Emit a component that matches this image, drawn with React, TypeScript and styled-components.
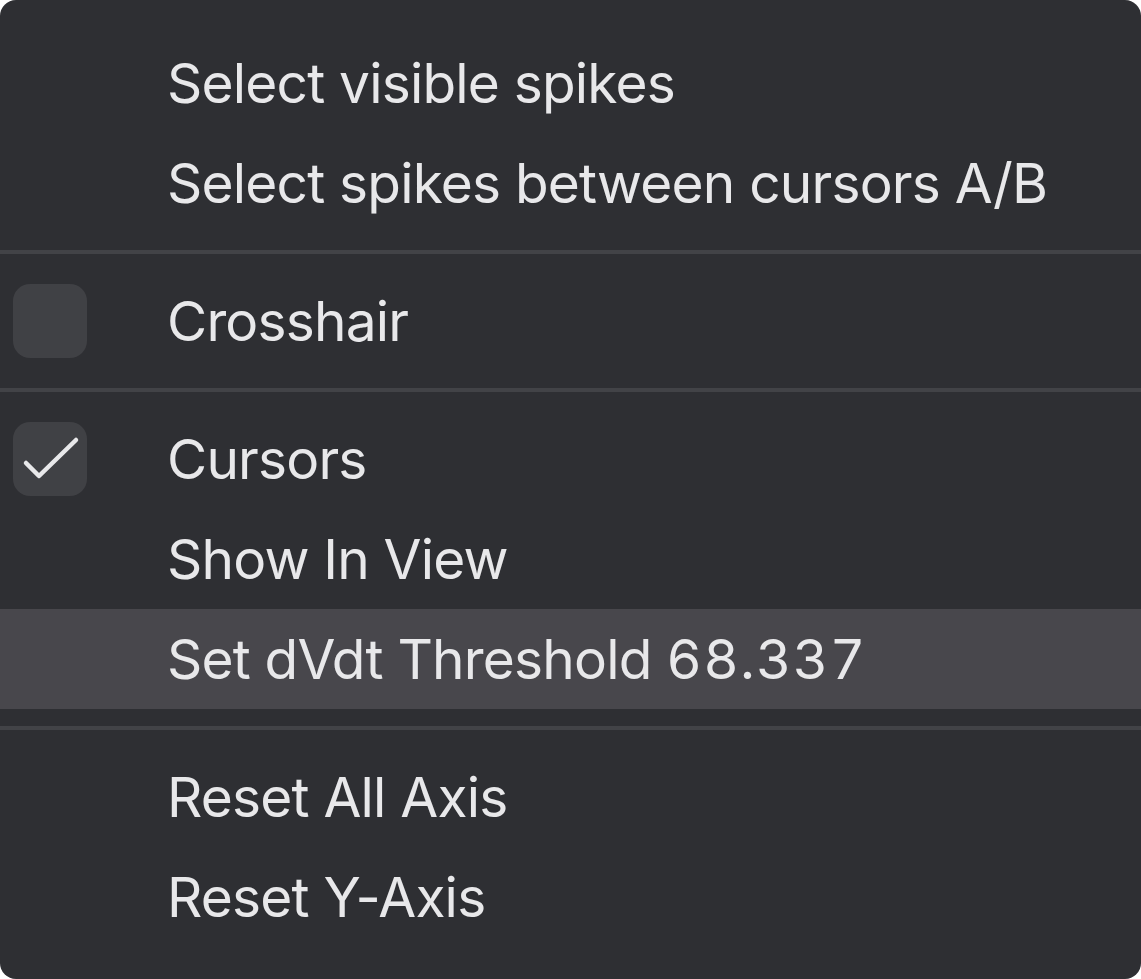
import React from "react";
import styled, { createGlobalStyle } from "styled-components";

const Global = createGlobalStyle`
  html, body { margin: 0; padding: 0; background: #ffffff; }
  body { font-family: Inter, "Noto Sans", sans-serif; }
`;

const Menu = styled.div`
  width: 1141px;
  height: 979px;
  box-sizing: border-box;
  background: #2e2f33;
  border-radius: 16px;
  padding-top: 33px;
  display: flex;
  flex-direction: column;
  overflow: hidden;
`;

const Row = styled.div<{ $active?: boolean }>`
  height: 100px;
  display: flex;
  align-items: center;
  background: ${(p) => (p.$active ? "#48474c" : "transparent")};
  flex-shrink: 0;
`;

const CheckSlot = styled.div`
  width: 167px;
  flex-shrink: 0;
  display: flex;
  align-items: center;
  padding-left: 13px;
  box-sizing: border-box;
`;

const Box = styled.div`
  width: 74px;
  height: 74px;
  border-radius: 17px;
  background: #404145;
  display: flex;
  align-items: center;
  justify-content: center;
`;

const Label = styled.span`
  color: #e8e8ea;
  font-size: 55px;
  font-weight: 400;
  letter-spacing: -0.8px;
  white-space: nowrap;
  line-height: 1;
`;

const Num = styled.span`
  font-variant-numeric: tabular-nums;
  font-feature-settings: "tnum" 1;
  letter-spacing: 1.2px;
`;

const Separator = styled.div`
  height: 38px;
  display: flex;
  align-items: center;
  flex-shrink: 0;
  &::after {
    content: "";
    display: block;
    width: 100%;
    height: 4px;
    background: #424347;
  }
`;

const Check = () => (
  <svg width="74" height="74" viewBox="0 0 74 74">
    <path
      d="M13 41 L26 54 L63 18"
      fill="none"
      stroke="#e8e8ea"
      strokeWidth="4.5"
      strokeLinecap="round"
      strokeLinejoin="round"
    />
  </svg>
);

type Item = { label: string; value?: string; check?: "on" | "off"; active?: boolean };

const Entry = ({ label, value, check, active }: Item) => (
  <Row $active={active}>
    <CheckSlot>{check && <Box>{check === "on" && <Check />}</Box>}</CheckSlot>
    <Label>
      {label}
      {value && <Num>{value}</Num>}
    </Label>
  </Row>
);

export default function App() {
  return (
    <>
      <Global />
      <Menu>
        <Entry label="Select visible spikes" />
        <Entry label="Select spikes between cursors A/B" />
        <Separator />
        <Entry label="Crosshair" check="off" />
        <Separator />
        <Entry label="Cursors" check="on" />
        <Entry label="Show In View" />
        <Entry label="Set dVdt Threshold " value="68.337" active />
        <Separator />
        <Entry label="Reset All Axis" />
        <Entry label="Reset Y-Axis" />
      </Menu>
    </>
  );
}
